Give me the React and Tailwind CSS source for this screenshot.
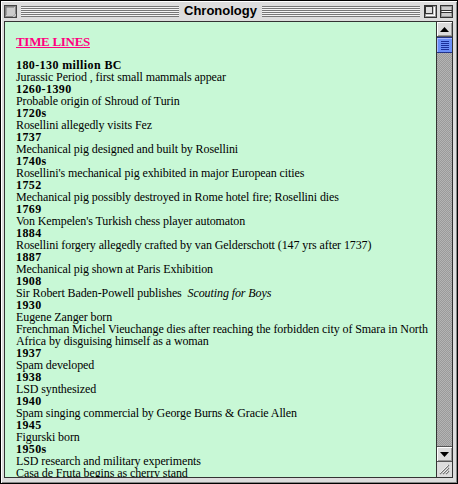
import React from "react";

const entries = [
  ["180-130 million BC", ["Jurassic Period , first small mammals appear"]],
  ["1260-1390", ["Probable origin of Shroud of Turin"]],
  ["1720s", ["Rosellini allegedly visits Fez"]],
  ["1737", ["Mechanical pig designed and built by Rosellini"]],
  ["1740s", ["Rosellini's mechanical pig exhibited in major European cities"]],
  ["1752", ["Mechanical pig possibly destroyed in Rome hotel fire; Rosellini dies"]],
  ["1769", ["Von Kempelen's Turkish chess player automaton"]],
  ["1884", ["Rosellini forgery allegedly crafted by van Gelderschott (147 yrs after 1737)"]],
  ["1887", ["Mechanical pig shown at Paris Exhibition"]],
  ["1908", ["SCOUT"]],
  ["1930", ["Eugene Zanger born", "Frenchman Michel Vieuchange dies after reaching the forbidden city of Smara in North", "Africa by disguising himself as a woman"]],
  ["1937", ["Spam developed"]],
  ["1938", ["LSD synthesized"]],
  ["1940", ["Spam singing commercial by George Burns & Gracie Allen"]],
  ["1945", ["Figurski born"]],
  ["1950s", ["LSD research and military experiments", "Casa de Fruta begins as cherry stand"]],
];

function CloseBox() {
  return (
    <svg width="13" height="13" viewBox="0 0 13 13" className="shrink-0">
      <rect x="0.5" y="0.5" width="12" height="12" fill="#bbbbbb" stroke="#444" />
      <rect x="1.5" y="1.5" width="10" height="10" fill="#cccccc" stroke="#888" />
      <path d="M2 2h8M2 2v8" stroke="#777" />
      <path d="M9 11h2v-2" stroke="#fff" />
    </svg>
  );
}

function ZoomBox() {
  return (
    <svg width="13" height="13" viewBox="0 0 13 13" className="shrink-0">
      <rect x="0.5" y="0.5" width="12" height="12" fill="#dddddd" stroke="#333" />
      <rect x="1.5" y="1.5" width="10" height="10" fill="#cccccc" stroke="#999" />
      <rect x="1.5" y="1.5" width="7" height="7" fill="#dddddd" stroke="#333" />
      <path d="M2 10.5h9M10.5 2v9" stroke="#fff" />
    </svg>
  );
}

function CollapseBox() {
  return (
    <svg width="13" height="13" viewBox="0 0 13 13" className="shrink-0">
      <rect x="0.5" y="0.5" width="12" height="12" fill="#dddddd" stroke="#333" />
      <rect x="1.5" y="1.5" width="10" height="10" fill="#cccccc" stroke="#999" />
      <path d="M1 5.5h11M1 7.5h11" stroke="#333" />
      <path d="M2 6.5h9" stroke="#fff" />
    </svg>
  );
}

function Stripes() {
  return (
    <div className="flex-1 h-[11px] bg-[repeating-linear-gradient(to_bottom,#777777_0px,#777777_1px,#f4f4f4_1px,#f4f4f4_2px)]" />
  );
}

function ArrowBox({ down }) {
  return (
    <div className="h-[15px] flex items-center justify-center bg-[#dcdcdc] border-b border-[#555] shadow-[inset_1px_1px_0_#ffffff,inset_-1px_-1px_0_#999999]">
      <svg width="9" height="5" viewBox="0 0 9 5">
        {down ? <path d="M0 0h9L4.5 5z" fill="#000" /> : <path d="M0 5h9L4.5 0z" fill="#000" />}
      </svg>
    </div>
  );
}

export default function App() {
  return (
    <div className="w-[458px] h-[484px] border border-black bg-[#dddddd] flex flex-col shadow-[inset_1px_1px_0_#ffffff,inset_-1px_-1px_0_#888888]">
      <div className="h-[20px] shrink-0 flex items-center pl-[3px] pr-[4px]">
        <CloseBox />
        <div className="ml-[4px] flex-1 flex items-center">
          <Stripes />
          <span className="px-[5px] text-[13px] leading-[14px] font-bold text-black font-['Liberation_Sans',Arial,sans-serif]">
            Chronology
          </span>
          <Stripes />
        </div>
        <div className="ml-[4px] flex items-center gap-[3px]">
          <ZoomBox />
          <CollapseBox />
        </div>
      </div>
      <div className="flex-1 flex pl-[3px] pr-[4px] pb-[5px] min-h-0">
        <div className="flex-1 flex border border-[#333] min-h-0">
          <div className="flex-1 overflow-hidden bg-[#c8f8d6] pl-[11px] pt-[13px] font-['Liberation_Serif','Times_New_Roman',serif] text-black">
            <div className="text-[13px] leading-[14px] font-bold text-[#ff0080] underline mb-[10px] tracking-[-0.3px]">
              TIME LINES
            </div>
            {entries.map(([year, lines]) => (
              <div key={year}>
                <div className="text-[12px] leading-[12px] font-bold whitespace-nowrap tracking-[0.4px]">{year}</div>
                {lines.map((l) =>
                  l === "SCOUT" ? (
                    <div key={l} className="text-[12px] leading-[12px] whitespace-nowrap tracking-[-0.1px]">
                      Sir Robert Baden-Powell publishes{" "}
                      <span className="italic ml-[3px]">Scouting for Boys</span>
                    </div>
                  ) : (
                    <div key={l} className="text-[12px] leading-[12px] whitespace-nowrap tracking-[-0.1px]">
                      {l}
                    </div>
                  )
                )}
              </div>
            ))}
          </div>
          <div className="w-[16px] shrink-0 border-l border-[#333] flex flex-col">
            <ArrowBox />
            <div className="h-[16px] bg-[#6b8ff8] border-b border-t border-[#223388] flex flex-col items-center justify-center gap-[1px] shadow-[inset_1px_1px_0_#aabbff]">
              {[0, 1, 2, 3, 4].map((i) => (
                <div key={i} className="w-[8px] h-[1px] bg-[#1a2f9a]" />
              ))}
            </div>
            <div className="flex-1 bg-[#a4a4a4] bg-[repeating-conic-gradient(#9a9a9a_0%_25%,#b4b4b4_0%_50%)] bg-[length:2px_2px]" />
            <div className="border-t border-[#555]">
              <ArrowBox down />
            </div>
            <div className="h-[15px] flex items-center justify-center bg-[#dcdcdc]">
              <svg width="11" height="11" viewBox="0 0 11 11">
                <path d="M1 10L10 1M4 10L10 4M7 10L10 7" stroke="#777" strokeWidth="1.2" />
                <path d="M1 9L9 1M4 9L9 4M7 9L9 7" stroke="#fff" strokeWidth="0.8" />
              </svg>
            </div>
          </div>
        </div>
      </div>
    </div>
  );
}
